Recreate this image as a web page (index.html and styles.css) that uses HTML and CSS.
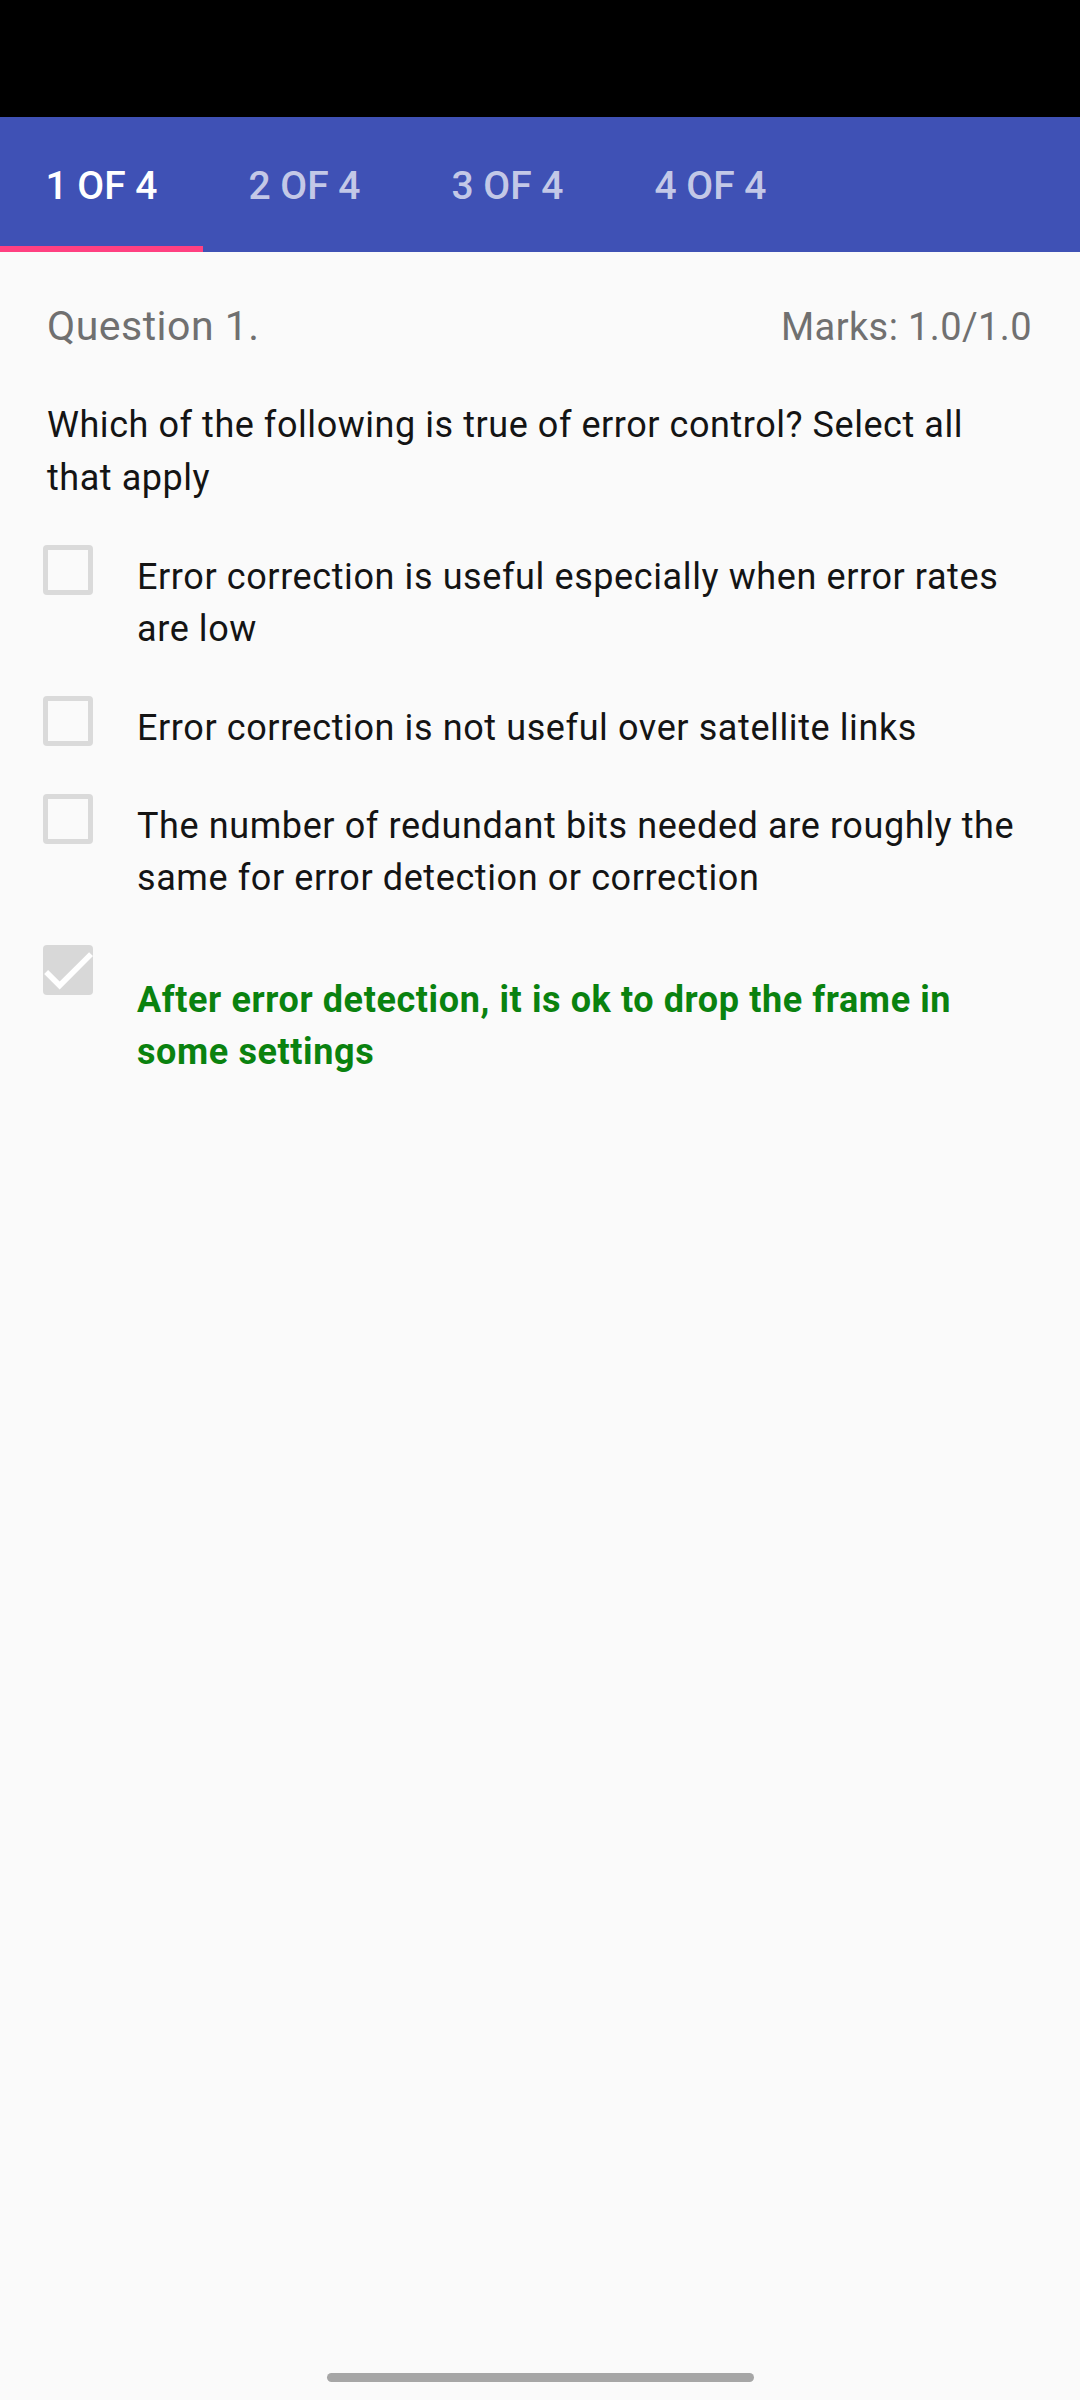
FILE: index.html
```html
<!DOCTYPE html>
<html lang="en">
<head>
<meta charset="utf-8">
<title>Quiz</title>
<link rel="stylesheet" href="styles.css">
</head>
<body>
<div class="screen">
  <div class="status-bar"></div>
  <div class="tab-bar">
    <div class="tab active">1 OF 4</div>
    <div class="tab">2 OF 4</div>
    <div class="tab">3 OF 4</div>
    <div class="tab">4 OF 4</div>
  </div>
  <main class="content">
    <div class="header">
      <span class="q-label">Question 1.</span>
      <span class="marks">Marks: 1.0/1.0</span>
    </div>
    <p class="question">Which of the following is true of error control? Select all that apply</p>
    <ul class="options">
      <li class="option">
        <span class="box"></span>
        <span class="opt-text">Error correction is useful especially when error rates are low</span>
      </li>
      <li class="option">
        <span class="box"></span>
        <span class="opt-text">Error correction is not useful over satellite links</span>
      </li>
      <li class="option">
        <span class="box"></span>
        <span class="opt-text">The number of redundant bits needed are roughly the same for error detection or correction</span>
      </li>
      <li class="option">
        <span class="box checked"><svg viewBox="3 3 18 18" width="50" height="50"><path d="M9 16.17L4.83 12l-1.42 1.41L9 19 21 7l-1.41-1.41z" fill="#ffffff"/></svg></span>
        <span class="opt-text correct">After error detection, it is ok to drop the frame in some settings</span>
      </li>
    </ul>
  </main>
  <div class="nav-area"><div class="home-bar"></div></div>
</div>
</body>
</html>
```
FILE: styles.css
```css
html, body {
  margin: 0;
  padding: 0;
  background: #fafafa;
}
.screen {
  width: 1080px;
  height: 2400px;
  display: flex;
  flex-direction: column;
  overflow: hidden;
  font-family: Roboto, "Noto Sans", sans-serif;
  background: #fafafa;
}
.status-bar {
  height: 117px;
  background: #000000;
  flex: none;
}
.tab-bar {
  height: 135px;
  background: #3f51b5;
  display: flex;
  flex: none;
}
.tab {
  position: relative;
  width: 203px;
  display: flex;
  align-items: center;
  justify-content: center;
  font-size: 39px;
  font-weight: 500;
  color: rgba(255, 255, 255, 0.7);
  padding-top: 3px;
  box-sizing: border-box;
}
.tab.active {
  color: #ffffff;
}
.tab.active::after {
  content: "";
  position: absolute;
  left: 0;
  right: 0;
  bottom: 0;
  height: 6px;
  background: #ff4081;
}
.content {
  flex: 1;
  padding: 50px 48px 0 47px;
}
.header {
  display: flex;
  justify-content: space-between;
  align-items: baseline;
  line-height: 48px;
  color: #707070;
}
.q-label {
  font-size: 41px;
  letter-spacing: 0.5px;
}
.marks {
  font-size: 38px;
  letter-spacing: 0.4px;
}
.question {
  margin: 48px 0 0 0;
  padding-right: 40px;
  font-size: 36px;
  line-height: 53px;
  letter-spacing: 0.55px;
  color: #141414;
}
.options {
  list-style: none;
  margin: 40px 0 0 -4px;
  padding: 0;
  display: flex;
  flex-direction: column;
  gap: 40.5px;
}
.option {
  display: flex;
  align-items: flex-start;
  gap: 44px;
}
.box {
  flex: none;
  width: 50px;
  height: 50px;
  box-sizing: border-box;
  border: 5px solid #dadada;
  border-radius: 4px;
  background: transparent;
}
.box.checked {
  border: none;
  background: #d8d8d8;
  display: flex;
}
.box svg {
  display: block;
}
.opt-text {
  margin-top: 6px;
  font-size: 36px;
  line-height: 52px;
  letter-spacing: 0.6px;
  color: #141414;
}
.opt-text.correct {
  margin-top: 29px;
  font-weight: 700;
  letter-spacing: 0.6px;
  color: #0a820f;
}
.nav-area {
  flex: none;
  display: flex;
  justify-content: center;
  padding-bottom: 18px;
}
.home-bar {
  width: 427px;
  height: 9px;
  border-radius: 5px;
  background: #a6a6a6;
}
```
